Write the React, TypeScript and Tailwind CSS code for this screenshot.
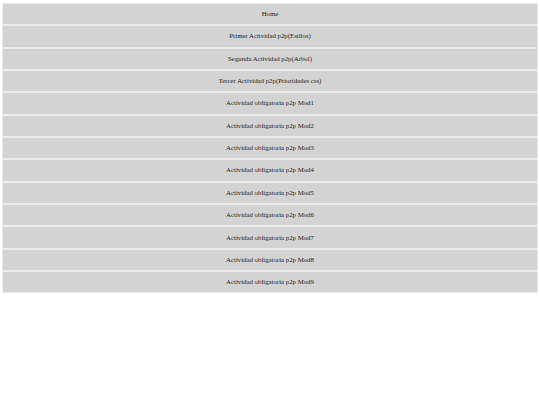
const items = [
  'Home',
  'Primer Actividad p2p(Estilos)',
  'Segunda Actividad p2p(Arbol)',
  'Tercer Actividad p2p(Prioridades css)',
  'Actividad obligatoria p2p Mod1',
  'Actividad obligatoria p2p Mod2',
  'Actividad obligatoria p2p Mod3',
  'Actividad obligatoria p2p Mod4',
  'Actividad obligatoria p2p Mod5',
  'Actividad obligatoria p2p Mod6',
  'Actividad obligatoria p2p Mod7',
  'Actividad obligatoria p2p Mod8',
  'Actividad obligatoria p2p Mod9',
];

export default function App() {
  return (
    <div className="min-h-[405px] w-[540px] bg-white px-[2px] pt-[3px] font-['Liberation_Serif',serif] text-[#222]">
      <ul className="flex flex-col">
        {items.map((item) => (
          <li key={item}>
            <a
              href="#"
              className="flex h-[22.35px] items-center justify-center border border-[#ebebeb] bg-[#d3d3d3] text-[6.8px]"
            >
              {item}
            </a>
          </li>
        ))}
      </ul>
    </div>
  );
}
